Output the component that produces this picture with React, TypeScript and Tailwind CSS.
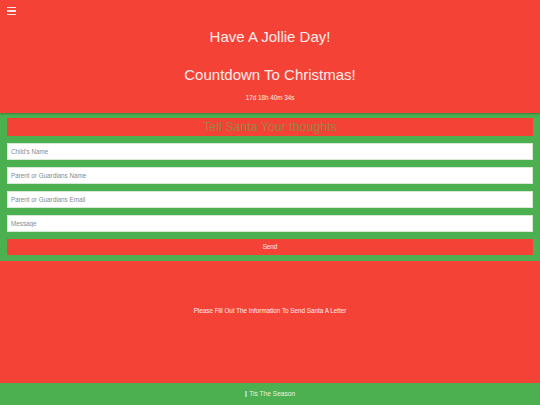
import React from "react";

export default function App() {
  return (
    <div className="w-full min-h-[405px] flex flex-col bg-[#f44336]" style={{ fontFamily: "'Liberation Sans', Arial, sans-serif" }}>
      <header className="h-[113px] bg-[#f44336] flex flex-col items-center text-white/90 relative z-10 shadow-[0_1px_2px_rgba(0,0,0,0.25)]">
        <div className="self-start h-[20px] pl-[7px] pt-[7px] flex flex-col gap-[2px]">
          <span className="block w-[9px] h-[1.4px] bg-white/85" />
          <span className="block w-[9px] h-[1.4px] bg-white/85" />
          <span className="block w-[9px] h-[1.4px] bg-white/85" />
        </div>
        <h1 className="mt-[8px] text-[15px] leading-[18px] font-normal">Have A Jollie Day!</h1>
        <h2 className="mt-[19.5px] text-[15px] leading-[18px] font-normal">Countdown To Christmas!</h2>
        <p className="mt-[10px] text-[6.3px] leading-[8px]">17d 18h 40m 34s</p>
      </header>
      <section className="bg-[#4caf50] px-[7px] pt-[5px] pb-[6px] flex flex-col gap-[7px]">
        <div className="h-[18px] bg-[#f44336] flex items-center justify-center text-[12.4px] leading-none text-[#a08143]">Tell Santa Your thoughts</div>
        {["Child's Name", "Parent or Guardians Name", "Parent or Guardians Email", "Message"].map((p) => (
          <input
            key={p}
            placeholder={p}
            className="h-[17px] bg-white border border-[#d6ebd6] px-[3px] text-[6.3px] placeholder:text-[#8a8a8a] outline-none"
          />
        ))}
        <button className="h-[16px] bg-[#f44336] text-white/90 text-[6.3px] leading-none">Send</button>
      </section>
      <main className="h-[122px] bg-[#f44336] flex justify-center pt-[46px]">
        <p className="text-[6.3px] leading-[8px] text-white/90">Please Fill Out The Information To Send Santa A Letter</p>
      </main>
      <footer className="h-[22px] bg-[#4caf50] flex items-center justify-center text-[6.6px] text-white/85">
        <span className="inline-block w-[2.5px] h-[5.5px] border-[0.5px] border-white/50 mr-[2px]" />
        Tis The Season
      </footer>
    </div>
  );
}
